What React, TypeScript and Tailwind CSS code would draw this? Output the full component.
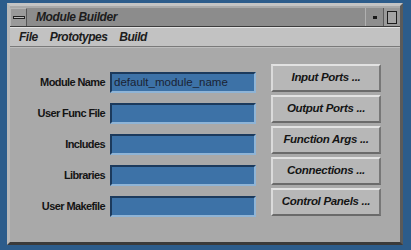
import React from "react"

const fields = [
  { label: "Module Name", value: "default_module_name" },
  { label: "User Func File", value: "" },
  { label: "Includes", value: "" },
  { label: "Libraries", value: "" },
  { label: "User Makefile", value: "" },
]

const actions = ["Input Ports ...", "Output Ports ...", "Function Args ...", "Connections ...", "Control Panels ..."]

export default function App() {
  return (
    <div
      className="h-[250px] w-[411px] overflow-hidden bg-[#2c5c8b] pl-[7px] pt-[3px]"
      style={{ fontFamily: '"Liberation Sans", Arial, sans-serif' }}
    >
      {/* Window frame */}
      <div className="flex h-[242px] w-[396px] flex-col border-[3px] border-t-[#c4c4c4] border-l-[#b8b8b8] border-r-[#5a5a5a] border-b-[#3a3a3a] bg-[#a9a9a9]">
        {/* Title bar */}
        <div className="flex h-[19px] items-stretch border-b border-[#3c3c3c] bg-[#8c8c8c] mt-[2px]">
          <div className="flex w-[17px] items-center justify-center border-r border-t border-l border-r-[#555] border-t-[#b5b5b5] border-l-[#b5b5b5] bg-[#9a9a9a]">
            <div className="h-[3px] w-[12px] border border-[#222] bg-[#bdbdbd]" />
          </div>
          <div className="flex flex-1 items-center pl-[9px] text-[12px] font-bold italic tracking-[-0.4px] text-[#1c1c1c]">
            Module Builder
          </div>
          <div className="flex w-[18px] items-center justify-center border-l border-l-[#b0b0b0] bg-[#8e8e8e]">
            <div className="h-[3px] w-[4px] bg-[#1a1a1a]" />
          </div>
          <div className="flex w-[17px] items-center justify-center border-l border-l-[#5a5a5a] bg-[#9a9a9a]">
            <div className="h-[13px] w-[10px] border border-[#1c1c1c] bg-[#a4a4a4]" />
          </div>
        </div>

        {/* Menu bar */}
        <div className="flex h-[20px] items-center gap-[12px] border-t border-[#e4e4e4] border-b border-b-[#7a7a7a] bg-[#c2c2c2] pl-[9px] text-[12px] font-bold italic tracking-[-0.5px] text-[#1c1c1c]">
          <span>File</span>
          <span>Prototypes</span>
          <span>Build</span>
        </div>

        {/* Body */}
        <div className="flex flex-1 border-t border-[#bdbdbd]">
          <div className="flex flex-col gap-[10px] pt-[24px]">
            {fields.map((f) => (
              <div key={f.label} className="flex h-[21px] items-center">
                <div className="w-[96px] pr-[1px] text-right text-[11px] font-bold tracking-[-0.6px] text-[#141414]">
                  {f.label}
                </div>
                <div className="ml-[4px] flex h-[21px] w-[146px] items-center border-2 border-t-[#1c3a5c] border-l-[#1c3a5c] border-b-[#8fb4d6] border-r-[#8fb4d6] bg-[#3d72a7] pl-[2px] text-[11.5px] text-[#1a2233]">
                  {f.value}
                </div>
              </div>
            ))}
          </div>
          <div className="ml-[15px] flex flex-col gap-[3px] pt-[16px]">
            {actions.map((a) => (
              <div
                key={a}
                className="flex h-[28px] w-[110px] items-center justify-center border-2 border-t-[#e2e2e2] border-l-[#dadada] border-b-[#6a6a6a] border-r-[#777] bg-[#b7b7b7] text-[11.5px] font-bold italic tracking-[-0.3px] text-[#141414]"
              >
                {a}
              </div>
            ))}
          </div>
        </div>
      </div>
    </div>
  )
}
